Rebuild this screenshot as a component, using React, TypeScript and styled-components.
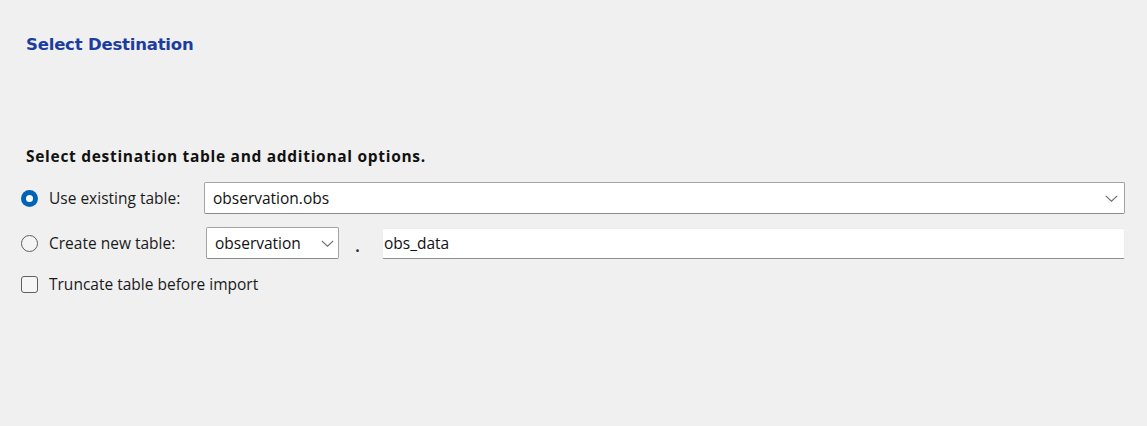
import React from "react";
import styled, { createGlobalStyle } from "styled-components";

const Global = createGlobalStyle`
  html, body { margin: 0; padding: 0; background: #f0f0f0; }
  #root { width: 1147px; height: 426px; }
`;

const Page = styled.div`
  width: 1147px;
  height: 426px;
  box-sizing: border-box;
  background: #f0f0f0;
  padding: 34px 22px 0 21px;
  font-family: "Open Sans", "Liberation Sans", Arial, sans-serif;
  font-size: 15.5px;
  color: #1a1a1a;
`;

const Title = styled.h1`
  margin: 0 0 0 5px;
  font-family: "DejaVu Sans", Verdana, sans-serif;
  font-weight: bold;
  font-size: 16.5px;
  line-height: 22px;
  color: #1b3d9e;
  letter-spacing: -0.2px;
`;

const Section = styled.section`
  margin-top: 91px;
  display: flex;
  flex-direction: column;
`;

const Heading = styled.h2`
  margin: 0 0 17px 5px;
  font-weight: bold;
  font-size: 15.5px;
  line-height: 18px;
  letter-spacing: 0.7px;
  color: #111;
`;

const Row = styled.div<{ $h: number; $mt?: number }>`
  display: grid;
  grid-template-columns: 183px 1fr;
  align-items: center;
  height: ${(p) => p.$h}px;
  margin-top: ${(p) => p.$mt ?? 0}px;
`;

const Choice = styled.label`
  display: flex;
  align-items: center;
  gap: 11px;
  white-space: nowrap;
`;

const Radio = styled.span<{ $on?: boolean }>`
  width: 17px;
  height: 17px;
  box-sizing: border-box;
  border-radius: 50%;
  flex: none;
  ${(p) =>
    p.$on
      ? `background: #0063b5; display:flex; align-items:center; justify-content:center;
         &::after { content: ""; width: 7px; height: 7px; border-radius: 50%; background: #fff; }`
      : `border: 1.5px solid #5f5f5f; background: #f4f4f4;`}
`;

const Check = styled.span`
  width: 17px;
  height: 17px;
  box-sizing: border-box;
  border: 1.5px solid #5f5f5f;
  border-radius: 3px;
  background: #f6f6f6;
  flex: none;
`;

const Combo = styled.div<{ $w?: number; $ml?: number; $pr?: number }>`
  display: flex;
  align-items: center;
  justify-content: space-between;
  box-sizing: border-box;
  height: 32px;
  width: ${(p) => (p.$w ? `${p.$w}px` : "auto")};
  margin-left: ${(p) => p.$ml ?? 0}px;
  background: #fff;
  border: 1px solid #a3a3a3;
  border-bottom-color: #8a8a8a;
  border-radius: 2px;
  padding: 0 ${(p) => p.$pr ?? 6}px 0 8px;
  color: #111;
`;

const Chevron = () => (
  <svg width="13" height="7" viewBox="0 0 13 7" fill="none">
    <path d="M0.8 0.8 L6.5 6.2 L12.2 0.8" stroke="#6a6a6a" strokeWidth="1.1" />
  </svg>
);

const Pair = styled.div`
  display: flex;
  align-items: center;
`;

const Dot = styled.span`
  width: 43px;
  box-sizing: border-box;
  padding: 6px 6px 0 0;
  text-align: center;
  color: #333;
  font-weight: bold;
`;

const TextField = styled.div`
  flex: 1;
  box-sizing: border-box;
  height: 31px;
  display: flex;
  align-items: center;
  background: #fff;
  border: 1px solid #ececec;
  border-bottom: 1px solid #8e8e8e;
  border-radius: 2px;
  padding: 0 1px;
  color: #111;
`;

export default function App() {
  return (
    <>
      <Global />
      <Page>
        <Title>Select Destination</Title>
        <Section>
          <Heading>Select destination table and additional options.</Heading>
          <Row $h={32}>
            <Choice>
              <Radio $on />
              Use existing table:
            </Choice>
            <Combo>
              <span>observation.obs</span>
              <Chevron />
            </Combo>
          </Row>
          <Row $h={32} $mt={13}>
            <Choice>
              <Radio />
              Create new table:
            </Choice>
            <Pair>
              <Combo $w={133} $ml={2} $pr={4}>
                <span>observation</span>
                <Chevron />
              </Combo>
              <Dot>.</Dot>
              <TextField>obs_data</TextField>
            </Pair>
          </Row>
          <Row $h={22} $mt={14}>
            <Choice>
              <Check />
              Truncate table before import
            </Choice>
          </Row>
        </Section>
      </Page>
    </>
  );
}
